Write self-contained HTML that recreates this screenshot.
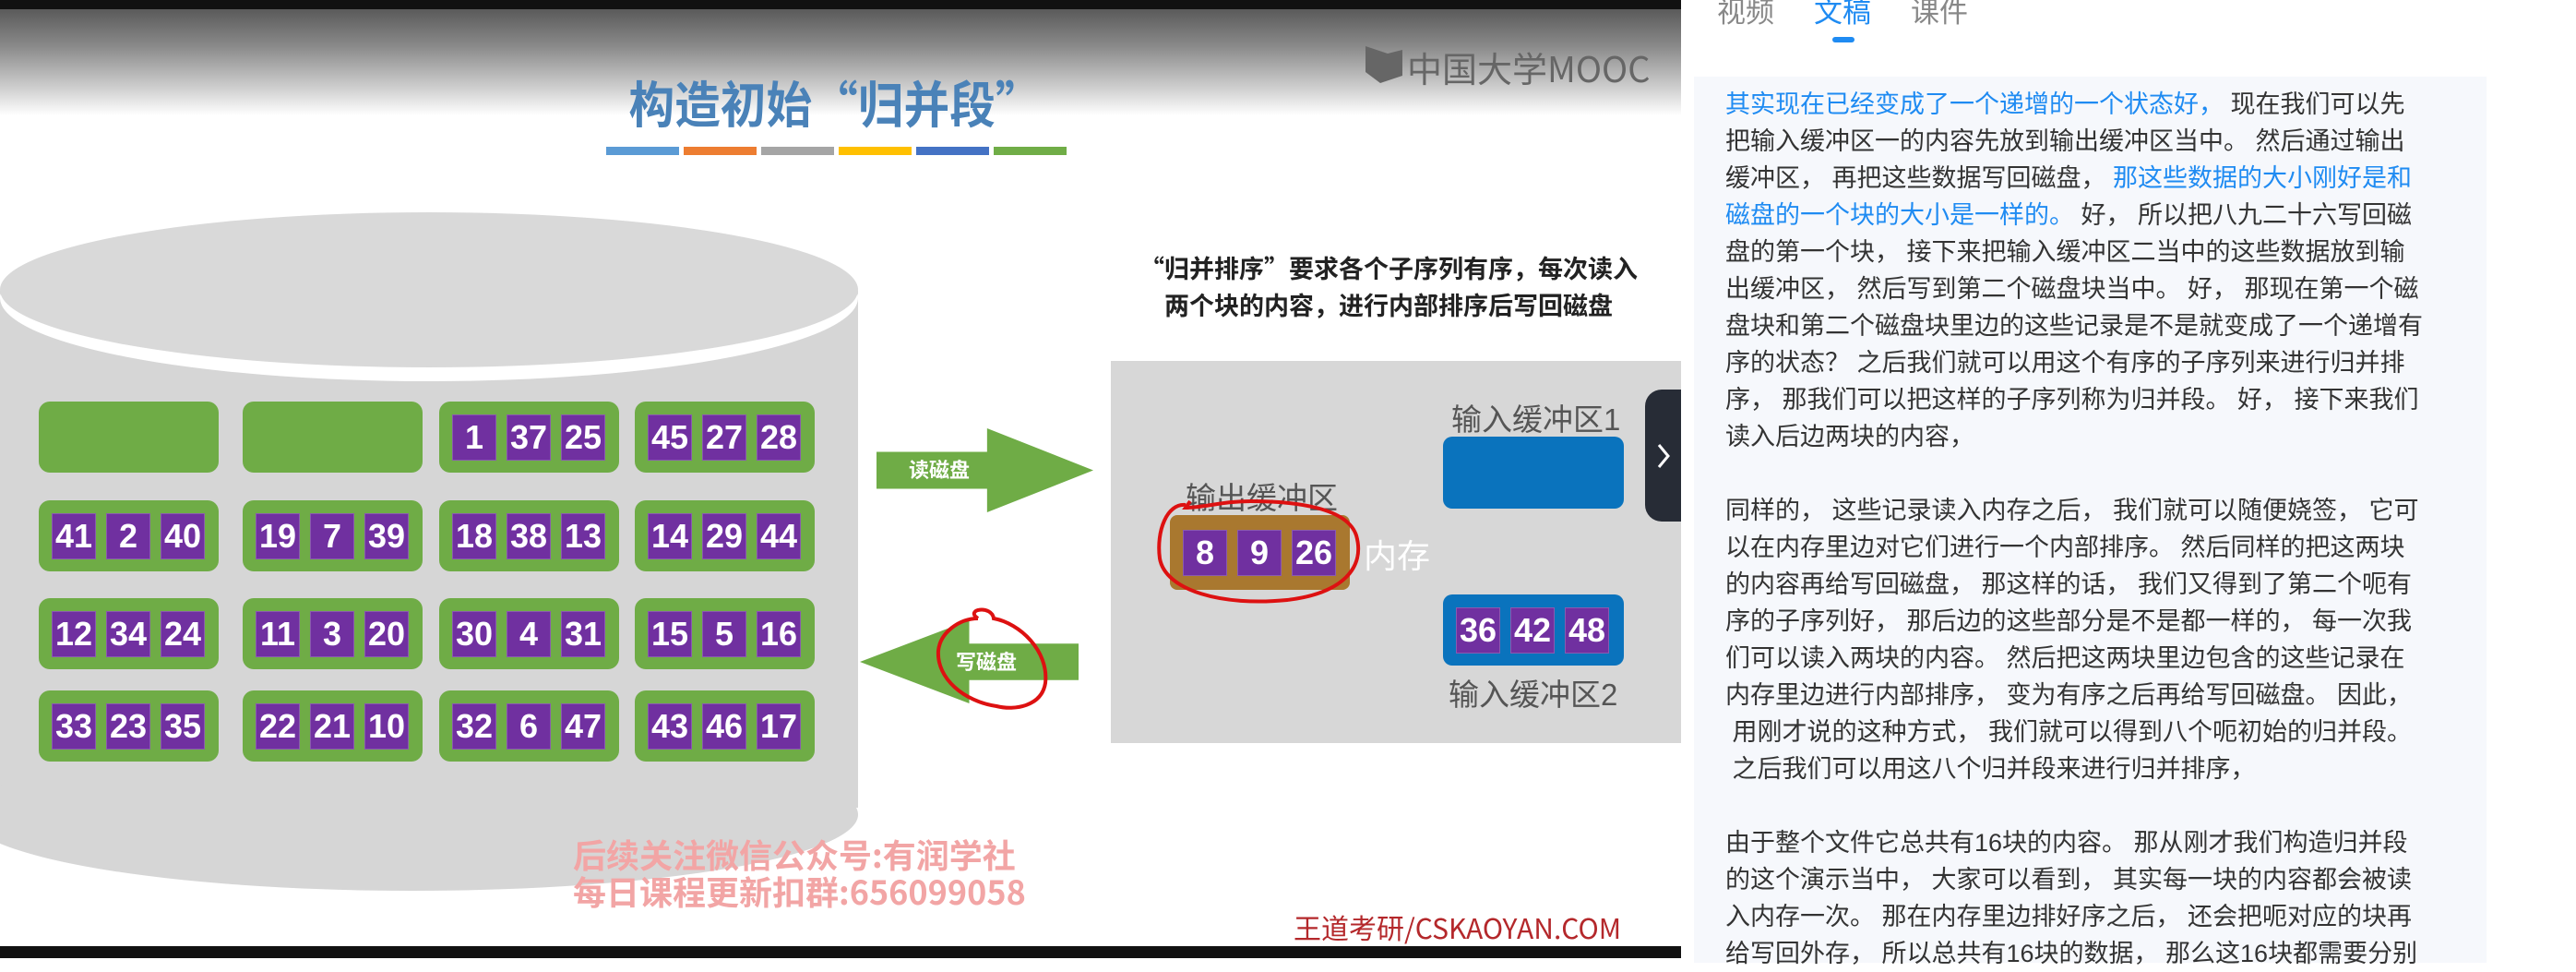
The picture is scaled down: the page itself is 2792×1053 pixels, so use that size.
<!DOCTYPE html>
<html><head><meta charset="utf-8"><style>
*{margin:0;padding:0;box-sizing:border-box}
body{width:2792px;height:1038px;position:relative;overflow:hidden;background:#fff;font-family:"Liberation Sans","Noto Sans CJK SC",sans-serif}
.abs{position:absolute}
.video{position:absolute;left:0;top:0;width:1822px;height:1038px;background:#fff;overflow:hidden}
.blk{position:absolute;width:195px;height:77px;background:#6fac46;border-radius:12px;display:flex;gap:11px;padding:0 14px;align-items:center}
.p{width:48px;height:50px;background:#7030a0;color:#fff;font-family:"Liberation Sans Narrow","Liberation Sans",sans-serif;font-weight:bold;font-size:36px;display:flex;align-items:center;justify-content:center;border:1px solid #8a5ab0}
.lbl{position:absolute;color:#555;font-size:33px;font-family:"Liberation Sans","Noto Sans CJK SC",sans-serif;white-space:nowrap}
.txt{position:absolute;left:1870px;font-size:27px;color:#333;white-space:nowrap;line-height:40px}
.b{color:#1f8bf2}
</style></head><body>
<div class="video">
<div class="abs" style="left:0;top:10px;width:1822px;height:115px;background:linear-gradient(#5a5a5a,#8a8a8a 35%,#d0d0d0 75%,#fff)"></div>
<div class="abs" style="left:0;top:0;width:1822px;height:10px;background:#111"></div>
<div class="abs" style="left:0;top:1025px;width:1822px;height:13px;background:#111"></div>
<div class="abs" style="left:640px;top:70px;width:530px;text-align:center;font-size:54px;font-weight:bold;color:#4a82b8;font-family:'Noto Sans CJK SC',sans-serif;transform:scaleX(0.92)">构造初始“归并段”</div>
<div class="abs" style="left:657px;top:159px;width:79px;height:9px;background:#5b9bd5"></div>
<div class="abs" style="left:741px;top:159px;width:79px;height:9px;background:#ed7d31"></div>
<div class="abs" style="left:825px;top:159px;width:79px;height:9px;background:#a5a5a5"></div>
<div class="abs" style="left:909px;top:159px;width:79px;height:9px;background:#ffc000"></div>
<div class="abs" style="left:993px;top:159px;width:79px;height:9px;background:#4472c4"></div>
<div class="abs" style="left:1077px;top:159px;width:79px;height:9px;background:#70ad47"></div>
<div class="abs" style="left:1480px;top:50px;width:40px;height:40px;background:#666;clip-path:polygon(0 0,60% 20%,100% 10%,100% 80%,40% 100%,0 70%)"></div>
<div class="abs" style="left:1525px;top:50px;font-size:38px;color:#666;font-family:'Noto Sans CJK SC',sans-serif;line-height:46px">中国大学MOOC</div>
<!-- cylinder -->
<div class="abs" style="left:0;top:315px;width:930px;height:560px;background:#d6d6d6"></div>
<div class="abs" style="left:-36px;top:800px;width:966px;height:165px;border-radius:50%;background:#d6d6d6"></div>
<div class="abs" style="left:0;top:232px;width:930px;height:181px;border-radius:50%;background:#fff"></div>
<div class="abs" style="left:0;top:230px;width:930px;height:168px;border-radius:50%;background:#d9d9d9"></div>
<!-- blocks -->
<div class="blk" style="left:42px;top:435px"></div>
<div class="blk" style="left:263px;top:435px"></div>
<div class="blk" style="left:476px;top:435px"><div class="p">1</div><div class="p">37</div><div class="p">25</div></div>
<div class="blk" style="left:688px;top:435px"><div class="p">45</div><div class="p">27</div><div class="p">28</div></div>
<div class="blk" style="left:42px;top:542px"><div class="p">41</div><div class="p">2</div><div class="p">40</div></div>
<div class="blk" style="left:263px;top:542px"><div class="p">19</div><div class="p">7</div><div class="p">39</div></div>
<div class="blk" style="left:476px;top:542px"><div class="p">18</div><div class="p">38</div><div class="p">13</div></div>
<div class="blk" style="left:688px;top:542px"><div class="p">14</div><div class="p">29</div><div class="p">44</div></div>
<div class="blk" style="left:42px;top:648px"><div class="p">12</div><div class="p">34</div><div class="p">24</div></div>
<div class="blk" style="left:263px;top:648px"><div class="p">11</div><div class="p">3</div><div class="p">20</div></div>
<div class="blk" style="left:476px;top:648px"><div class="p">30</div><div class="p">4</div><div class="p">31</div></div>
<div class="blk" style="left:688px;top:648px"><div class="p">15</div><div class="p">5</div><div class="p">16</div></div>
<div class="blk" style="left:42px;top:748px"><div class="p">33</div><div class="p">23</div><div class="p">35</div></div>
<div class="blk" style="left:263px;top:748px"><div class="p">22</div><div class="p">21</div><div class="p">10</div></div>
<div class="blk" style="left:476px;top:748px"><div class="p">32</div><div class="p">6</div><div class="p">47</div></div>
<div class="blk" style="left:688px;top:748px"><div class="p">43</div><div class="p">46</div><div class="p">17</div></div>
<!-- arrows -->
<div class="abs" style="left:950px;top:464px;width:235px;height:91px;background:#6fac46;clip-path:polygon(0 28%,51% 28%,51% 0,100% 50%,51% 100%,51% 72%,0 72%)"></div>
<div class="abs" style="left:985px;top:492px;font-size:22px;font-weight:bold;color:#fff;font-family:'Noto Sans CJK SC',sans-serif">读磁盘</div>
<div class="abs" style="left:932px;top:672px;width:237px;height:90px;background:#6fac46;clip-path:polygon(100% 28%,50% 28%,50% 0,0 50%,50% 100%,50% 72%,100% 72%)"></div>
<div class="abs" style="left:1036px;top:700px;font-size:22px;font-weight:bold;color:#fff;font-family:'Noto Sans CJK SC',sans-serif">写磁盘</div>
<svg class="abs" style="left:1005px;top:655px" width="140" height="120"><path d="M55 15 C40 5 70 0 72 15 C100 20 132 50 128 85 C124 110 95 115 75 110 C40 105 10 80 12 50 C14 30 35 15 55 15" fill="none" stroke="#d11" stroke-width="4"/></svg>
<div class="abs" style="left:1205px;top:270px;width:600px;text-align:center;font-size:27px;font-weight:bold;color:#222;line-height:40px;font-family:'Noto Sans CJK SC',sans-serif">“归并排序”要求各个子序列有序，每次读入<br>两个块的内容，进行内部排序后写回磁盘</div>
<!-- memory -->
<div class="abs" style="left:1204px;top:391px;width:620px;height:414px;background:#d7d7d7"></div>
<div class="lbl" style="left:1573px;top:428px">输入缓冲区1</div>
<div class="abs" style="left:1564px;top:473px;width:196px;height:78px;background:#0a73bd;border-radius:10px"></div>
<div class="lbl" style="left:1285px;top:513px">输出缓冲区</div>
<div class="abs" style="left:1268px;top:558px;width:195px;height:81px;background:#a9782f;border-radius:8px;display:flex;gap:11px;padding:0 14px;align-items:center"><div class="p">8</div><div class="p">9</div><div class="p">26</div></div>
<div class="abs" style="left:1478px;top:578px;font-size:36px;color:#fff;font-family:'Noto Sans CJK SC',sans-serif;line-height:44px">内存</div>
<svg class="abs" style="left:1245px;top:535px" width="240" height="130"><path d="M40 12 C20 10 8 40 12 70 C18 105 80 122 150 115 C210 108 235 80 225 45 C215 15 160 8 110 8 C80 8 60 15 40 15 L45 8" fill="none" stroke="#d11" stroke-width="4"/></svg>
<div class="abs" style="left:1564px;top:644px;width:196px;height:77px;background:#0a73bd;border-radius:10px;display:flex;gap:11px;padding:0 14px;align-items:center"><div class="p">36</div><div class="p">42</div><div class="p">48</div></div>
<div class="lbl" style="left:1570px;top:726px">输入缓冲区2</div>
<div class="abs" style="left:1783px;top:422px;width:45px;height:143px;background:#272c36;border-radius:18px 0 0 18px"></div>
<svg class="abs" style="left:1793px;top:478px" width="20" height="32"><path d="M5 4 L15 16 L5 28" fill="none" stroke="#fff" stroke-width="3"/></svg>
<div class="abs" style="left:621px;top:905px;font-size:36px;font-weight:bold;color:#f2a5a5;line-height:40px;font-family:'Noto Sans CJK SC',sans-serif">后续关注微信公众号:有润学社<br>每日课程更新扣群:656099058</div>
<div class="abs" style="left:1402px;top:982px;font-size:30px;color:#b4282b;font-family:'Liberation Sans Narrow','Noto Sans CJK SC',sans-serif">王道考研/CSKAOYAN.COM</div>
</div>
<!-- right panel -->
<div class="abs" style="left:1861px;top:-12px;font-size:31px;color:#888;font-family:'Noto Sans CJK SC',sans-serif">视频</div>
<div class="abs" style="left:1966px;top:-12px;font-size:31px;color:#1f8bf2;font-family:'Noto Sans CJK SC',sans-serif">文稿</div>
<div class="abs" style="left:2071px;top:-12px;font-size:31px;color:#888;font-family:'Noto Sans CJK SC',sans-serif">课件</div>
<div class="abs" style="left:1986px;top:40px;width:24px;height:6px;border-radius:3px;background:#1f8bf2"></div>
<div class="abs" style="left:1836px;top:83px;width:859px;height:960px;background:#f6f8fc"></div>
<div class="txt" style="top:93px;font-family:'Liberation Sans','Noto Sans CJK SC',sans-serif">
<div><span class="b">其实现在已经变成了一个递增的一个状态好，</span> 现在我们可以先</div>
<div>把输入缓冲区一的内容先放到输出缓冲区当中。 然后通过输出</div>
<div>缓冲区， 再把这些数据写回磁盘， <span class="b">那这些数据的大小刚好是和</span></div>
<div><span class="b">磁盘的一个块的大小是一样的。</span> 好， 所以把八九二十六写回磁</div>
<div>盘的第一个块， 接下来把输入缓冲区二当中的这些数据放到输</div>
<div>出缓冲区， 然后写到第二个磁盘块当中。 好， 那现在第一个磁</div>
<div>盘块和第二个磁盘块里边的这些记录是不是就变成了一个递增有</div>
<div>序的状态？ 之后我们就可以用这个有序的子序列来进行归并排</div>
<div>序， 那我们可以把这样的子序列称为归并段。 好， 接下来我们</div>
<div>读入后边两块的内容，</div>
<div>&nbsp;</div>
<div>同样的， 这些记录读入内存之后， 我们就可以随便娆签， 它可</div>
<div>以在内存里边对它们进行一个内部排序。 然后同样的把这两块</div>
<div>的内容再给写回磁盘， 那这样的话， 我们又得到了第二个呃有</div>
<div>序的子序列好， 那后边的这些部分是不是都一样的， 每一次我</div>
<div>们可以读入两块的内容。 然后把这两块里边包含的这些记录在</div>
<div>内存里边进行内部排序， 变为有序之后再给写回磁盘。 因此，</div>
<div>&nbsp;用刚才说的这种方式， 我们就可以得到八个呃初始的归并段。</div>
<div>&nbsp;之后我们可以用这八个归并段来进行归并排序，</div>
<div>&nbsp;</div>
<div>由于整个文件它总共有16块的内容。 那从刚才我们构造归并段</div>
<div>的这个演示当中， 大家可以看到， 其实每一块的内容都会被读</div>
<div>入内存一次。 那在内存里边排好序之后， 还会把呃对应的块再</div>
<div>给写回外存， 所以总共有16块的数据， 那么这16块都需要分别</div>
</div>
</body></html>
